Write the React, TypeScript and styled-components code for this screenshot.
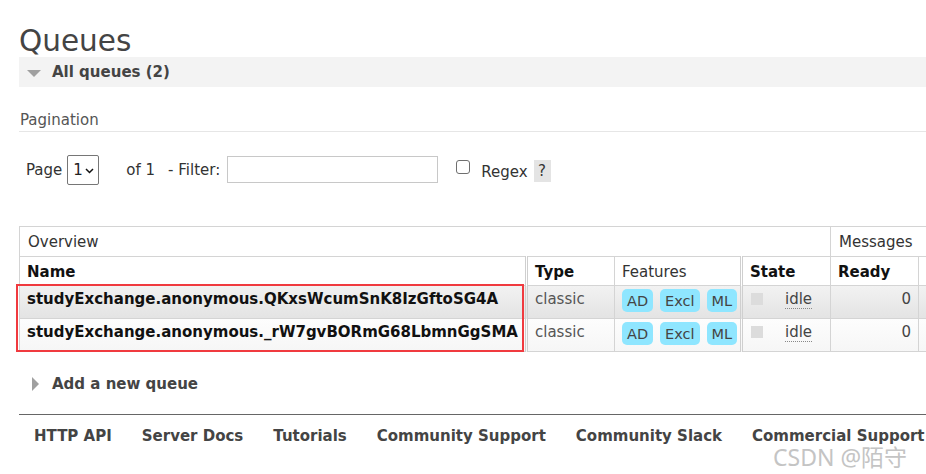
import React from "react";
import styled, { createGlobalStyle } from "styled-components";

const Global = createGlobalStyle`
  html, body { margin: 0; padding: 0; background: #fff; }
  body { font-family: "DejaVu Sans", Verdana, sans-serif; font-size: 15px; color: #444; }
`;

const Viewport = styled.div`
  position: relative;
  width: 926px;
  height: 474px;
  overflow: hidden;
`;

const Page = styled.div`
  width: 1040px;
  padding-left: 19px;
`;

const Title = styled.h1`
  margin: 0;
  padding-top: 26px;
  font-size: 29.5px;
  line-height: 31px;
  font-weight: normal;
  color: #444;
`;

const SectionBar = styled.div<{ $open?: boolean }>`
  display: flex;
  align-items: center;
  height: 30px;
  padding-left: 8px;
  background: ${(p) => (p.$open ? "#f3f3f3" : "transparent")};
  font-weight: bold;
  color: #444;
`;

const Arrow = styled.span<{ $open?: boolean }>`
  display: inline-block;
  width: 0;
  height: 0;
  margin-right: ${(p) => (p.$open ? "11px" : "13px")};
  margin-left: ${(p) => (p.$open ? "0" : "5px")};
  ${(p) =>
    p.$open
      ? `border-left: 7px solid transparent; border-right: 7px solid transparent; border-top: 7px solid #a0a0a0; margin-top: 2px;`
      : `border-top: 7px solid transparent; border-bottom: 7px solid transparent; border-left: 7px solid #a0a0a0;`}
`;

const SubHeading = styled.div`
  margin-top: 24px;
  padding: 0 0 2px 1px;
  line-height: 18px;
  color: #555;
  border-bottom: 1px solid #e6e6e6;
`;

const PagerRow = styled.div`
  display: flex;
  align-items: center;
  margin-top: 22px;
  padding-left: 7px;
  height: 31px;
  color: #333;
`;

const Label = styled.span<{ $mr: number; $drop?: number }>`
  margin-right: ${(p) => p.$mr}px;
  margin-top: ${(p) => (p.$drop ? p.$drop : 0)}px;
  line-height: 18px;
`;

const SelectWrap = styled.span`
  position: relative;
  display: inline-block;
  margin-right: 27px;
`;

const Select = styled.select`
  appearance: none;
  -webkit-appearance: none;
  display: block;
  width: 32px;
  height: 30px;
  padding: 0 0 0 5px;
  border: 1px solid #767676;
  border-radius: 2px;
  background: #fff;
  font-family: inherit;
  font-size: 15px;
  color: #222;
  outline: none;
`;

const Chevron = styled.svg`
  position: absolute;
  right: 5px;
  top: 13px;
  pointer-events: none;
`;

const FilterInput = styled.input`
  width: 211px;
  height: 27px;
  box-sizing: border-box;
  border: 1px solid #c8c8c8;
  margin: 0 18px 0 0;
  padding: 0 4px;
  font-family: inherit;
  font-size: 15px;
`;

const Check = styled.input`
  appearance: none;
  -webkit-appearance: none;
  width: 14px;
  height: 14px;
  margin: 0 11px 5px 0;
  border: 1px solid #6f6f6f;
  border-radius: 3px;
  background: #fff;
`;

const Help = styled.span`
  display: inline-flex;
  align-items: center;
  justify-content: center;
  width: 17px;
  height: 22px;
  margin-top: 2px;
  background: #e4e4e4;
  color: #333;
  font-size: 15px;
`;

const TableWrap = styled.div`
  position: relative;
  margin-top: 41px;
`;

const Table = styled.table`
  border-collapse: collapse;
  table-layout: fixed;
  width: 1001px;
  font-size: 15px;
`;

const GroupTh = styled.th`
  height: 28px;
  padding: 1px 8px 0;
  text-align: left;
  font-weight: normal;
  color: #333;
  border: 1px solid #d4d4d4;
`;

const Th = styled.th<{ $bold?: boolean; $sep?: boolean }>`
  height: 27px;
  padding: 1px 7px 0;
  text-align: left;
  font-weight: ${(p) => (p.$bold ? "bold" : "normal")};
  color: ${(p) => (p.$bold ? "#111" : "#333")};
  border: 1px solid #d4d4d4;
  border-left: ${(p) => (p.$sep ? "3px double #cfcfcf" : "1px solid #d4d4d4")};
`;

const Row = styled.tr<{ $alt?: boolean }>`
  background: ${(p) =>
    p.$alt
      ? "linear-gradient(#fdfdfd, #f6f6f6)"
      : "linear-gradient(#f2f2f2, #e3e3e3)"};
`;

const Td = styled.td<{ $sep?: boolean; $pt?: number; $right?: boolean; $bold?: boolean; $muted?: boolean }>`
  height: 33px;
  box-sizing: border-box;
  padding: ${(p) => p.$pt ?? 4}px 7px 0 7px;
  vertical-align: top;
  line-height: 18px;
  text-align: ${(p) => (p.$right ? "right" : "left")};
  font-weight: ${(p) => (p.$bold ? "bold" : "normal")};
  color: ${(p) => (p.$bold ? "#111" : p.$muted ? "#555" : "#444")};
  white-space: nowrap;
  border: 1px solid #d4d4d4;
  border-left: ${(p) => (p.$sep ? "3px double #cfcfcf" : "1px solid #d4d4d4")};
`;

const Badges = styled.div`
  display: flex;
  gap: 7px;
`;

const Badge = styled.span`
  display: inline-flex;
  align-items: center;
  height: 23px;
  padding: 0 5px;
  border-radius: 5px;
  background: #8fe6ff;
  color: #444;
  font-size: 14.5px;
`;

const StateBox = styled.span`
  display: inline-block;
  width: 12px;
  height: 12px;
  margin: 3px 22px 0 1px;
  vertical-align: top;
  background: #dcdcdc;
`;

const Idle = styled.abbr`
  text-decoration: none;
  border-bottom: 1px dotted #888;
  color: #444;
`;

const Highlight = styled.div`
  position: absolute;
  left: -3px;
  top: 58px;
  width: 508px;
  height: 68px;
  box-sizing: border-box;
  border: 2px solid #f03a3f;
  pointer-events: none;
`;

const AddBar = styled(SectionBar)`
  margin-top: 17px;
`;

const Footer = styled.div`
  display: flex;
  gap: 30px;
  margin-top: 15px;
  padding: 12px 0 0 15px;
  border-top: 1px solid #666;
`;

const FooterLink = styled.a`
  font-weight: bold;
  color: #444;
  text-decoration: none;
  line-height: 18px;
  white-space: nowrap;
`;

const Watermark = styled.div`
  position: absolute;
  left: 773px;
  top: 445px;
  font-family: "Noto Sans", "Noto Sans CJK SC", sans-serif;
  font-size: 23px;
  line-height: 24px;
  color: #c4c4c4;
  white-space: nowrap;
`;

const queues = [
  "studyExchange.anonymous.QKxsWcumSnK8IzGftoSG4A",
  "studyExchange.anonymous._rW7gvBORmG68LbmnGgSMA",
];

const links = [
  "HTTP API",
  "Server Docs",
  "Tutorials",
  "Community Support",
  "Community Slack",
  "Commercial Support",
];

export default function App() {
  return (
    <Viewport>
      <Global />
      <Page>
        <Title>Queues</Title>
        <SectionBar $open>
          <Arrow $open />
          All queues (2)
        </SectionBar>
        <SubHeading>Pagination</SubHeading>
        <PagerRow>
          <Label $mr={5}>Page</Label>
          <SelectWrap>
            <Select defaultValue="1">
              <option value="1">1</option>
            </Select>
            <Chevron width="9" height="6" viewBox="0 0 9 6">
              <polyline points="1,1 4.5,4.5 8,1" fill="none" stroke="#111" strokeWidth="1.5" />
            </Chevron>
          </SelectWrap>
          <Label $mr={13}>of 1</Label>
          <Label $mr={7}>- Filter:</Label>
          <FilterInput type="text" />
          <Check type="checkbox" />
          <Label $mr={6} $drop={4}>Regex</Label>
          <Help>?</Help>
        </PagerRow>
        <TableWrap>
          <Table>
            <colgroup>
              <col style={{ width: 507 }} />
              <col style={{ width: 88 }} />
              <col style={{ width: 127 }} />
              <col style={{ width: 89 }} />
              <col style={{ width: 88 }} />
              <col style={{ width: 100 }} />
              <col style={{ width: 2 }} />
            </colgroup>
            <thead>
              <tr>
                <GroupTh colSpan={4}>Overview</GroupTh>
                <GroupTh colSpan={3}>Messages</GroupTh>
              </tr>
              <tr>
                <Th $bold>Name</Th>
                <Th $bold $sep>Type</Th>
                <Th>Features</Th>
                <Th $bold $sep>State</Th>
                <Th $bold>Ready</Th>
                <Th $bold>Unacked</Th>
                <Th $bold>Total</Th>
              </tr>
            </thead>
            <tbody>
              {queues.map((q, i) => (
                <Row key={q} $alt={i % 2 === 1}>
                  <Td $bold>{q}</Td>
                  <Td $sep $muted>classic</Td>
                  <Td $pt={3}>
                    <Badges>
                      <Badge>AD</Badge>
                      <Badge>Excl</Badge>
                      <Badge>ML</Badge>
                    </Badges>
                  </Td>
                  <Td $sep>
                    <StateBox />
                    <Idle title="idle">idle</Idle>
                  </Td>
                  <Td $right>0</Td>
                  <Td $right>0</Td>
                  <Td $right>0</Td>
                </Row>
              ))}
            </tbody>
          </Table>
          <Highlight />
        </TableWrap>
        <AddBar>
          <Arrow />
          Add a new queue
        </AddBar>
        <Footer>
          {links.map((l) => (
            <FooterLink key={l} href="#">
              {l}
            </FooterLink>
          ))}
        </Footer>
      </Page>
      <Watermark>CSDN @陌守</Watermark>
    </Viewport>
  );
}
